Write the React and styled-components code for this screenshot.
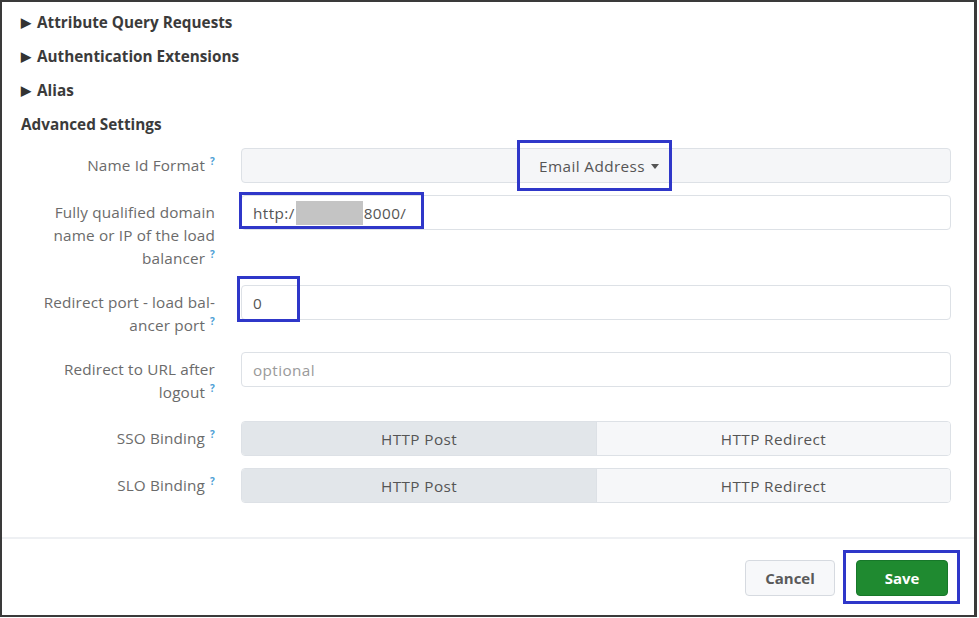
import React from "react";
import styled, { createGlobalStyle } from "styled-components";

const Global = createGlobalStyle`
  html, body { margin: 0; padding: 0; background: #fff; }
  body { font-family: "Open Sans", "Liberation Sans", sans-serif; }
  * { box-sizing: border-box; }
`;

const Frame = styled.div`
  width: 977px;
  height: 617px;
  border: 2px solid #3a3a3a;
  border-right-width: 3px;
  display: flex;
  flex-direction: column;
  background: #fff;
`;

const Body = styled.div`
  flex: 1;
  padding: 10px 23px 0 19px;
`;

const Section = styled.div`
  display: flex;
  align-items: center;
  gap: 6px;
  height: 20px;
  margin-bottom: 14px;
  font-size: 15.3px;
  font-weight: 700;
  color: #3b3b3b;
`;

const Arrow = styled.span`
  font-size: 12.5px;
  color: #333;
`;

const Form = styled.div`
  display: grid;
  grid-template-columns: 194px 1fr;
  column-gap: 26px;
  row-gap: 12px;
`;

const Label = styled.div`
  text-align: right;
  font-size: 15.3px;
  letter-spacing: 0.15px;
  line-height: 23px;
  padding: 6px 0 ${(p) => (p.$tall ? "5px" : "3px")};
  color: #6b6b6b;
  white-space: nowrap;
`;

const Help = styled.sup`
  color: #4e9fd6;
  font-size: 10px;
  font-weight: 700;
  margin-left: 5px;
  vertical-align: 6px;
  line-height: 0;
`;

const Field = styled.div`
  position: relative;
  height: 35px;
  border: 1px solid #dde1e6;
  border-radius: 4px;
  background: ${(p) => (p.$muted ? "#f5f6f8" : "#fff")};
  display: flex;
  align-items: center;
  justify-content: ${(p) => (p.$center ? "center" : "flex-start")};
  padding: 0 11px;
  font-size: 15.3px;
  letter-spacing: 0.4px;
  color: ${(p) => (p.$placeholder ? "#9a9a9a" : "#555")};
`;

const Highlight = styled.div`
  position: absolute;
  border: 3px solid #2f37c9;
  pointer-events: none;
`;

const Caret = styled.span`
  display: inline-block;
  margin-left: 6px;
  border-left: 4px solid transparent;
  border-right: 4px solid transparent;
  border-top: 5px solid #555;
  vertical-align: 3px;
`;

const SelectValue = styled.span`
  position: relative;
  margin-left: 6px;
`;

const Redacted = styled.span`
  display: inline-block;
  width: 67px;
  height: 24px;
  background: #c4c4c4;
  margin: 0 1px 0 1px;
`;

const Segmented = styled.div`
  display: grid;
  grid-template-columns: 1fr 1fr;
  height: 35px;
  border: 1px solid #dde1e6;
  border-radius: 4px;
  overflow: hidden;
`;

const Segment = styled.div`
  display: flex;
  align-items: center;
  justify-content: center;
  font-size: 15.3px;
  letter-spacing: 0.4px;
  color: #555;
  background: ${(p) => (p.$active ? "#e2e6ea" : "#f6f7f9")};
  border-left: ${(p) => (p.$active ? "none" : "1px solid #dde1e6")};
`;

const Divider = styled.div`
  height: 2px;
  background: #eef0f3;
`;

const Footer = styled.div`
  height: 76px;
  display: flex;
  justify-content: flex-end;
  align-items: center;
  gap: 21px;
  padding: 1px 26px 0 0;
`;

const Button = styled.button`
  position: relative;
  height: 36px;
  width: ${(p) => (p.$primary ? "92px" : "90px")};
  border-radius: 4px;
  border: 1px solid ${(p) => (p.$primary ? "#17782a" : "#d6dae0")};
  background: ${(p) => (p.$primary ? "#1f8a30" : "#f7f8fa")};
  color: ${(p) => (p.$primary ? "#fff" : "#5a5a5a")};
  font-family: inherit;
  font-size: 15px;
  font-weight: 700;
`;

function Q() {
  return <Help>?</Help>;
}

export default function App() {
  return (
    <>
      <Global />
      <Frame>
        <Body>
          <Section><Arrow>▶</Arrow>Attribute Query Requests</Section>
          <Section><Arrow>▶</Arrow>Authentication Extensions</Section>
          <Section><Arrow>▶</Arrow>Alias</Section>
          <Section>Advanced Settings</Section>

          <Form>
            <Label>Name Id Format<Q /></Label>
            <Field $muted $center>
              <SelectValue>
                Email Address<Caret />
                <Highlight style={{ left: -22, right: -13, top: -16, bottom: -15 }} />
              </SelectValue>
            </Field>

            <Label>Fully qualified domain<br />name or IP of the load<br />balancer<Q /></Label>
            <Field>
              http:/<Redacted />8000/
              <Highlight style={{ left: -3, width: 185, top: -4, bottom: 0 }} />
            </Field>

            <Label>Redirect port - load bal-<br />ancer port<Q /></Label>
            <Field>
              0
              <Highlight style={{ left: -5, width: 63, top: -10, bottom: -3 }} />
            </Field>

            <Label $tall>Redirect to URL after<br />logout<Q /></Label>
            <Field $placeholder>optional</Field>

            <Label>SSO Binding<Q /></Label>
            <Segmented>
              <Segment $active>HTTP Post</Segment>
              <Segment>HTTP Redirect</Segment>
            </Segmented>

            <Label>SLO Binding<Q /></Label>
            <Segmented>
              <Segment $active>HTTP Post</Segment>
              <Segment>HTTP Redirect</Segment>
            </Segmented>
          </Form>
        </Body>
        <Divider />
        <Footer>
          <Button>Cancel</Button>
          <Button $primary>
            Save
            <Highlight style={{ left: -14, right: -13, top: -11, bottom: -9 }} />
          </Button>
        </Footer>
      </Frame>
    </>
  );
}
